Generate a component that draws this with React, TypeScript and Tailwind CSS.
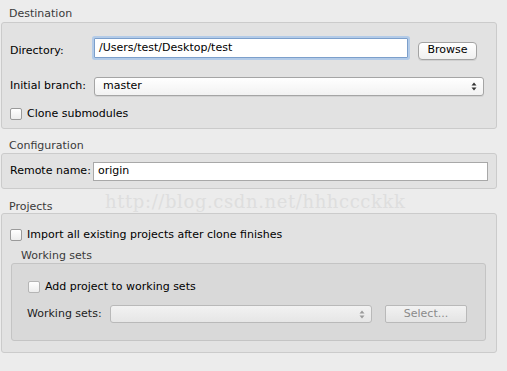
import React from 'react';

const font = { fontFamily: '"DejaVu Sans", "Liberation Sans", sans-serif' };

function Checkbox({ label, dim }: { label: string; dim?: boolean }) {
  return (
    <label className="flex items-center gap-[5px] text-[11px] text-black">
      <span
        className={`w-[12px] h-[12px] rounded-[2px] border bg-gradient-to-b from-white to-[#ededed] ${
          dim ? 'border-[#b5b5b5]' : 'border-[#9a9a9a]'
        }`}
      />
      <span>{label}</span>
    </label>
  );
}

function Arrows({ dim }: { dim?: boolean }) {
  const c = dim ? '#9a9a9a' : '#333';
  return (
    <svg width="6" height="9" viewBox="0 0 6 9" className="mr-[6px]">
      <path d="M3 0.5 L5.5 3.5 L0.5 3.5 Z" fill={c} />
      <path d="M3 8.5 L5.5 5.5 L0.5 5.5 Z" fill={c} />
    </svg>
  );
}

export default function App() {
  return (
    <div className="w-[507px] h-[371px] bg-[#ececec] overflow-hidden relative" style={font}>
      {/* Destination */}
      <div className="h-[22px] pl-[9px] pt-[7px] text-[11px] leading-[13px] text-[#3a3a3a]">Destination</div>
      <div className="ml-[1px] w-[496px] h-[107px] bg-[#e2e2e2] border border-[#cbcbcb] rounded-[3px] pt-[15px]">
        <div className="flex items-center h-[20px]">
          <span className="w-[92px] pl-[8px] text-[11px] text-black pt-[6px]">Directory:</span>
          <div className="w-[314px] h-[20px] bg-white border border-[#7c9fcb] shadow-[0_0_0_2px_#b3cbe8] rounded-[1px] flex items-center pl-[4px] text-[11px] text-black">
            /Users/test/Desktop/test
          </div>
          <button className="ml-[10px] mt-[5px] w-[59px] h-[18px] rounded-[4px] border border-[#a3a3a3] bg-gradient-to-b from-white to-[#f0f0f0] text-[11px] text-black flex items-center justify-center shadow-[0_1px_0_#d0d0d0]">
            Browse
          </button>
        </div>
        <div className="flex items-center h-[19px] mt-[19px]">
          <span className="w-[92px] pl-[8px] text-[11px] text-black">Initial branch:</span>
          <div className="w-[390px] h-[19px] rounded-[3px] border border-[#a5a5a5] bg-gradient-to-b from-white to-[#f2f2f2] flex items-center justify-between pl-[8px] text-[11px] text-black shadow-[0_1px_0_#d2d2d2]">
            <span>master</span>
            <Arrows />
          </div>
        </div>
        <div className="pl-[8px] mt-[10px]">
          <Checkbox label="Clone submodules" />
        </div>
      </div>

      {/* Configuration */}
      <div className="h-[24px] pl-[9px] pt-[10px] text-[11px] leading-[13px] text-[#3a3a3a]">Configuration</div>
      <div className="ml-[1px] w-[496px] h-[36px] bg-[#e2e2e2] border border-[#cbcbcb] rounded-[3px] flex items-center">
        <span className="w-[91px] pl-[8px] text-[11px] text-black">Remote name:</span>
        <div className="w-[395px] h-[19px] bg-white border border-[#a8a8a8] flex items-center pl-[4px] text-[11px] text-black">
          origin
        </div>
      </div>

      {/* Projects */}
      <div className="h-[24px] pl-[9px] pt-[11px] text-[11px] leading-[13px] text-[#3a3a3a]">Projects</div>
      <div className="ml-[1px] w-[496px] h-[140px] bg-[#e2e2e2] border border-[#cbcbcb] rounded-[3px] pt-[13px]">
        <div className="pl-[8px]">
          <Checkbox label="Import all existing projects after clone finishes" />
        </div>
        <div className="pl-[19px] mt-[5px] text-[11px] leading-[13px] text-[#3a3a3a]">Working sets</div>
        <div className="ml-[9px] mt-[1px] w-[475px] h-[78px] bg-[#d9d9d9] border border-[#c4c4c4] rounded-[3px] pt-[15px]">
          <div className="pl-[16px]">
            <Checkbox label="Add project to working sets" dim />
          </div>
          <div className="flex items-center mt-[10px] h-[18px]">
            <span className="w-[98px] pl-[15px] text-[11px] text-[#222]">Working sets:</span>
            <div className="w-[262px] h-[18px] rounded-[3px] border border-[#b9b9b9] bg-gradient-to-b from-[#f2f2f2] to-[#e6e6e6] flex items-center justify-end">
              <Arrows dim />
            </div>
            <button className="ml-[13px] w-[82px] h-[18px] rounded-[2px] border border-[#b9b9b9] bg-gradient-to-b from-[#f2f2f2] to-[#e4e4e4] text-[11px] text-[#8a8a8a] flex items-center justify-center">
              Select...
            </button>
          </div>
        </div>
      </div>

      {/* watermark */}
      <div
        className="absolute left-[105px] top-[188px] text-[18px] text-[#dedede] tracking-[0.6px] pointer-events-none"
        style={{ fontFamily: '"DejaVu Serif", "Liberation Serif", serif' }}
      >
        http://blog.csdn.net/hhhccckkk
      </div>
    </div>
  );
}
